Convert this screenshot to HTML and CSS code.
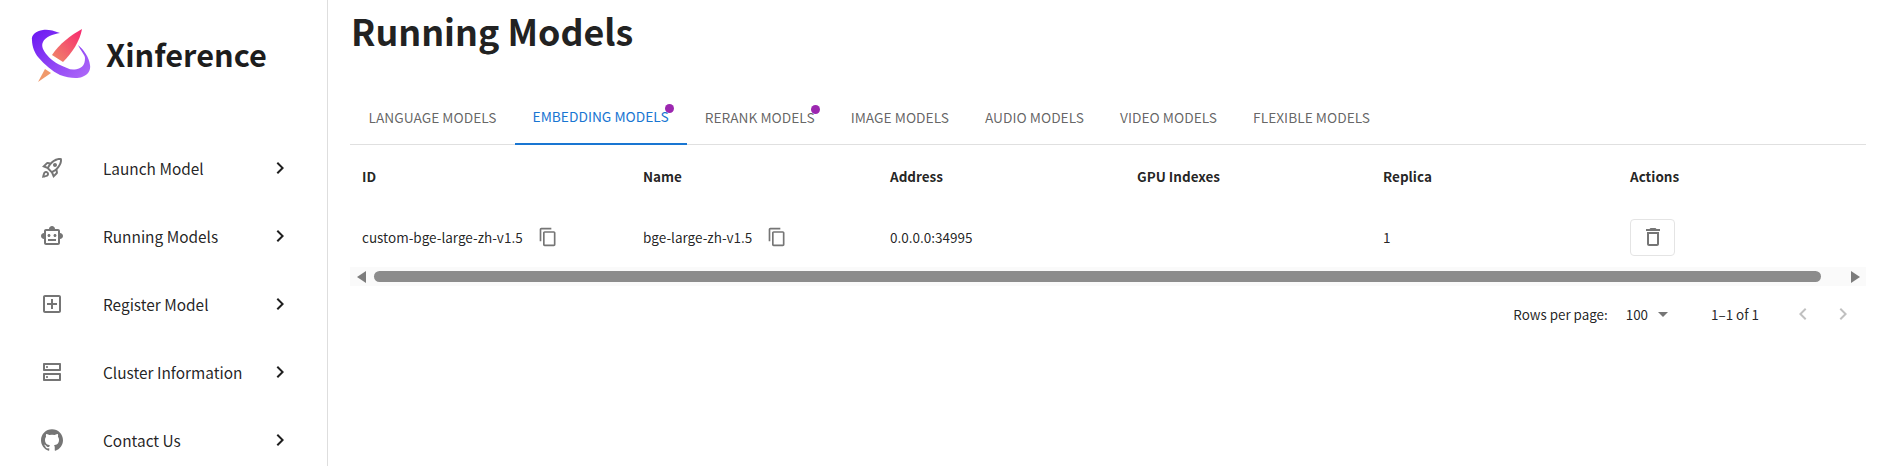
FILE: index.html
```html
<!DOCTYPE html>
<html lang="en">
<head>
<meta charset="utf-8">
<title>Running Models</title>
<link rel="stylesheet" href="styles.css">
</head>
<body>
<div class="app">
  <aside class="sidebar">
    <div class="brand">
      <svg class="logo" viewBox="0 0 60 54" width="60" height="54">
        <defs>
          <linearGradient id="ring" x1="0" y1="0" x2="1" y2="1"><stop offset="0" stop-color="#6a16f2"/><stop offset="1" stop-color="#b06cf8"/></linearGradient>
          <linearGradient id="blade" x1="0" y1="1" x2="1" y2="0"><stop offset="0" stop-color="#ef8a6a"/><stop offset="1" stop-color="#f7276f"/></linearGradient>
        </defs>
        <path fill="url(#ring)" d="M29 4C22 1 15 0 12 1C5 2 0 6 1 11C1 18 4 24 7 28C14 36 21 42 29 46C37 49 46 50 51 48C57 46 60 41 59 36C58 28 53 21 47 16C50 22 54 26 54 29C54 36 51 38 49 39C44 41 40 41 36 39C28 36 21 32 16 26C12 21 10 17 12 13C14 8 22 5 29 4Z"/>
        <path fill="url(#blade)" d="M51 0C40 6 28 15 21 26L32 33C41 24 49 12 51 0Z"/>
        <path fill="#f0996b" d="M7 53L14 40L20 44Z"/>
      </svg>
      <span class="brand-name">Xinference</span>
    </div>
    <nav class="nav">
      <div class="nav-item">
        <svg class="nav-icon" viewBox="0 0 24 24"><path d="M6 15c-.83 0-1.58.34-2.12.88C2.7 17.06 2 22 2 22s4.94-.7 6.12-1.88c.54-.54.88-1.29.88-2.12 0-1.66-1.34-3-3-3zm.71 3.71c-.28.28-2.17.76-2.17.76s.47-1.88.76-2.17c.17-.19.42-.3.7-.3.55 0 1 .45 1 1 0 .28-.11.53-.29.71zm10.71-5.06c6.36-6.36 4.24-11.31 4.24-11.31S16.71.22 10.35 6.58l-2.49-.5c-.65-.13-1.33.08-1.81.55L2 10.69l5 2.14L11.17 17l2.14 5 4.05-4.05c.47-.47.68-1.15.55-1.81l-.49-2.49zM7.41 10.83l-1.91-.82 1.97-1.97 1.44.29c-.57.83-1.08 1.7-1.5 2.5zm6.58 7.67l-.82-1.91c.8-.42 1.67-.93 2.49-1.5l.29 1.44-1.96 1.97zM16 12.24c-1.32 1.32-3.38 2.4-4.04 2.73l-2.93-2.93c.32-.65 1.4-2.71 2.73-4.04 4.68-4.68 8.23-3.99 8.23-3.99s.69 3.55-3.99 8.23zM15 11c1.1 0 2-.9 2-2s-.9-2-2-2-2 .9-2 2 .9 2 2 2z"/></svg>
        <span class="nav-label">Launch Model</span>
        <svg class="chev" viewBox="0 0 24 24"><path d="M10 6 8.59 7.41 13.17 12l-4.58 4.59L10 18l6-6z"/></svg>
      </div>
      <div class="nav-item">
        <svg class="nav-icon" viewBox="0 0 24 24"><path d="M20 9V7c0-1.1-.9-2-2-2h-3c0-1.66-1.34-3-3-3S9 3.34 9 5H6c-1.1 0-2 .9-2 2v2c-1.66 0-3 1.34-3 3s1.34 3 3 3v4c0 1.1.9 2 2 2h12c1.1 0 2-.9 2-2v-4c1.66 0 3-1.34 3-3s-1.34-3-3-3zm-2 10H6V7h12v12zm-9-6c-.83 0-1.5-.67-1.5-1.5S8.17 10 9 10s1.5.67 1.5 1.5S9.83 13 9 13zm7.5-1.5c0 .83-.67 1.5-1.5 1.5s-1.5-.67-1.5-1.5.67-1.5 1.5-1.5 1.5.67 1.5 1.5zM8 15h8v2H8v-2z"/></svg>
        <span class="nav-label">Running Models</span>
        <svg class="chev" viewBox="0 0 24 24"><path d="M10 6 8.59 7.41 13.17 12l-4.58 4.59L10 18l6-6z"/></svg>
      </div>
      <div class="nav-item">
        <svg class="nav-icon" viewBox="0 0 24 24"><path d="M19 3H5c-1.1 0-2 .9-2 2v14c0 1.1.9 2 2 2h14c1.1 0 2-.9 2-2V5c0-1.1-.9-2-2-2zm0 16H5V5h14v14zm-8-2h2v-4h4v-2h-4V7h-2v4H7v2h4z"/></svg>
        <span class="nav-label">Register Model</span>
        <svg class="chev" viewBox="0 0 24 24"><path d="M10 6 8.59 7.41 13.17 12l-4.58 4.59L10 18l6-6z"/></svg>
      </div>
      <div class="nav-item">
        <svg class="nav-icon" viewBox="0 0 24 24"><path d="M20 13H4c-.55 0-1 .45-1 1v6c0 .55.45 1 1 1h16c.55 0 1-.45 1-1v-6c0-.55-.45-1-1-1zm-1 6H5v-4h14v4zM7 18c.55 0 1-.45 1-1s-.45-1-1-1-1 .45-1 1 .45 1 1 1zM20 3H4c-.55 0-1 .45-1 1v6c0 .55.45 1 1 1h16c.55 0 1-.45 1-1V4c0-.55-.45-1-1-1zm-1 6H5V5h14v4zM7 8c.55 0 1-.45 1-1s-.45-1-1-1-1 .45-1 1 .45 1 1 1z"/></svg>
        <span class="nav-label">Cluster Information</span>
        <svg class="chev" viewBox="0 0 24 24"><path d="M10 6 8.59 7.41 13.17 12l-4.58 4.59L10 18l6-6z"/></svg>
      </div>
      <div class="nav-item">
        <svg class="nav-icon" viewBox="0 0 24 24"><path d="M12 1.3C5.9 1.3 1 6.2 1 12.3c0 4.9 3.2 9 7.5 10.5.55.1.75-.24.75-.53v-1.9c-3.06.66-3.7-1.47-3.7-1.47-.5-1.27-1.22-1.6-1.22-1.6-1-.68.08-.67.08-.67 1.1.08 1.68 1.13 1.68 1.13.98 1.68 2.57 1.2 3.2.91.1-.71.38-1.2.7-1.47-2.44-.28-5-1.22-5-5.43 0-1.2.43-2.18 1.13-2.95-.11-.28-.49-1.4.11-2.91 0 0 .92-.3 3.02 1.13a10.5 10.5 0 0 1 5.5 0c2.1-1.42 3.02-1.13 3.02-1.13.6 1.51.22 2.63.11 2.91.7.77 1.13 1.75 1.13 2.95 0 4.22-2.57 5.15-5.02 5.42.4.34.75 1 .75 2.03v3c0 .29.2.64.76.53C19.8 21.3 23 17.2 23 12.3 23 6.2 18.1 1.3 12 1.3z"/></svg>
        <span class="nav-label">Contact Us</span>
        <svg class="chev" viewBox="0 0 24 24"><path d="M10 6 8.59 7.41 13.17 12l-4.58 4.59L10 18l6-6z"/></svg>
      </div>
    </nav>
  </aside>
  <main class="main">
    <h1 class="title">Running Models</h1>
    <div class="tabs">
      <div class="tab">LANGUAGE MODELS</div>
      <div class="tab active"><span class="tab-text dot">EMBEDDING MODELS</span></div>
      <div class="tab"><span class="tab-text dot">RERANK MODELS</span></div>
      <div class="tab">IMAGE MODELS</div>
      <div class="tab">AUDIO MODELS</div>
      <div class="tab">VIDEO MODELS</div>
      <div class="tab">FLEXIBLE MODELS</div>
    </div>
    <div class="grid head">
      <div class="cell">ID</div>
      <div class="cell">Name</div>
      <div class="cell">Address</div>
      <div class="cell">GPU Indexes</div>
      <div class="cell">Replica</div>
      <div class="cell">Actions</div>
    </div>
    <div class="grid row">
      <div class="cell">custom-bge-large-zh-v1.5
        <svg class="copy" viewBox="0 0 24 24"><path d="M16 1H4c-1.1 0-2 .9-2 2v14h2V3h12V1zm3 4H8c-1.1 0-2 .9-2 2v14c0 1.1.9 2 2 2h11c1.1 0 2-.9 2-2V7c0-1.1-.9-2-2-2zm0 16H8V7h11v14z"/></svg>
      </div>
      <div class="cell">bge-large-zh-v1.5
        <svg class="copy" viewBox="0 0 24 24"><path d="M16 1H4c-1.1 0-2 .9-2 2v14h2V3h12V1zm3 4H8c-1.1 0-2 .9-2 2v14c0 1.1.9 2 2 2h11c1.1 0 2-.9 2-2V7c0-1.1-.9-2-2-2zm0 16H8V7h11v14z"/></svg>
      </div>
      <div class="cell">0.0.0.0:34995</div>
      <div class="cell"></div>
      <div class="cell">1</div>
      <div class="cell">
        <div class="del"><svg viewBox="0 0 24 24"><path d="M6 19c0 1.1.9 2 2 2h8c1.1 0 2-.9 2-2V7H6v12zM8 9h8v10H8V9zm7.5-5-1-1h-5l-1 1H5v2h14V4z"/></svg></div>
      </div>
    </div>
    <div class="scrollbar">
      <span class="arrow left"></span>
      <span class="thumb"></span>
      <span class="arrow right"></span>
    </div>
    <div class="pager">
      <span>Rows per page:</span>
      <span class="select">100<svg viewBox="0 0 24 24"><path d="m7 10 5 5 5-5z"/></svg></span>
      <span class="range">1–1 of 1</span>
      <svg class="page-btn" viewBox="0 0 24 24"><path d="M15.41 7.41 14 6l-6 6 6 6 1.41-1.41L10.83 12z"/></svg>
      <svg class="page-btn" viewBox="0 0 24 24"><path d="M10 6 8.59 7.41 13.17 12l-4.58 4.59L10 18l6-6z"/></svg>
    </div>
  </main>
</div>
</body>
</html>
```
FILE: styles.css
```css
* { box-sizing: border-box; }
html, body { margin: 0; height: 466px; overflow: hidden; background: #fff; }
body { font-family: "Noto Sans CJK SC", "Noto Sans", sans-serif; color: rgba(0,0,0,.87); }
.app { display: flex; height: 466px; }
.sidebar { width: 328px; flex: none; border-right: 1px solid #dedede; }
.brand { display: flex; align-items: center; height: 112px; padding-left: 31px; }
.logo { flex: none; }
.brand-name { margin: -4px 0 0 15px; font-size: 30.7px; font-weight: 600; line-height: 1; color: #1d1d1d; }
.nav { padding-top: 22px; display: flex; flex-direction: column; }
.nav-item { display: flex; align-items: center; height: 68px; padding-left: 40px; }
.nav-icon { width: 24px; height: 24px; flex: none; fill: #757575; }
.nav-label { margin-left: 39px; width: 170px; font-size: 15.4px; line-height: 24px; }
.chev { width: 24px; height: 24px; margin-left: -5px; fill: #1f1f1f; }
.main { flex: 1; padding: 0 22px; min-width: 0; }
.title { margin: 0; padding: 4px 0 0 1px; height: 90px; font-size: 35.8px; line-height: 52px; font-weight: 700; color: #222; }
.tabs { display: flex; height: 55px; border-bottom: 1px solid #e0e0e0; }
.tab { display: flex; align-items: center; height: 55px; padding: 0 18px 1px; font-size: 13.75px; font-weight: 400; color: rgba(0,0,0,.62); white-space: nowrap; }
.tab:first-child { padding-left: 18.5px; }
.tab.active { color: #1976d2; border-bottom: 2px solid #1976d2; }
.tab-text { position: relative; }
.dot::after { content: ""; position: absolute; width: 9px; height: 9px; border-radius: 50%; background: #9c27b0; right: -5px; top: -2px; }
.grid { display: grid; grid-template-columns: 281px 248px 247px 246px 247px 1fr; }
.head { height: 62px; align-items: center; font-size: 13.5px; font-weight: 600; }
.row { height: 60px; align-items: center; font-size: 13.5px; }
.cell { padding-left: 12px; display: flex; align-items: center; white-space: nowrap; }
.cell:nth-child(n+3) { padding-left: 11px; }
.copy { width: 20px; height: 20px; margin-left: 15px; fill: #757575; }
.del { width: 45px; height: 37px; border: 1px solid #e4e4e4; border-radius: 4px; display: flex; align-items: center; justify-content: center; }
.del svg { width: 24px; height: 24px; fill: #757575; }
.scrollbar { display: flex; align-items: center; height: 19px; background: #fafafa; }
.arrow { width: 0; height: 0; border-top: 6px solid transparent; border-bottom: 6px solid transparent; flex: none; }
.arrow.left { border-right: 9px solid #7c7c7c; margin-left: 7px; }
.arrow.right { border-left: 9px solid #7c7c7c; margin-right: 6px; }
.thumb { flex: 1; height: 11px; margin: 0 30px 0 8px; background: #8c8c8c; border-radius: 6px; }
.pager { display: flex; align-items: center; justify-content: flex-end; height: 56px; font-size: 13.4px; padding-right: 11px; }
.select { display: flex; align-items: center; margin-left: 18px; }
.select svg { width: 24px; height: 24px; fill: #757575; margin-left: 3px; }
.range { margin-left: 36px; margin-right: 32px; }
.page-btn { width: 24px; height: 24px; fill: #c0c0c0; margin-left: 16px; }
.page-btn:first-of-type { margin-left: 0; }
```
